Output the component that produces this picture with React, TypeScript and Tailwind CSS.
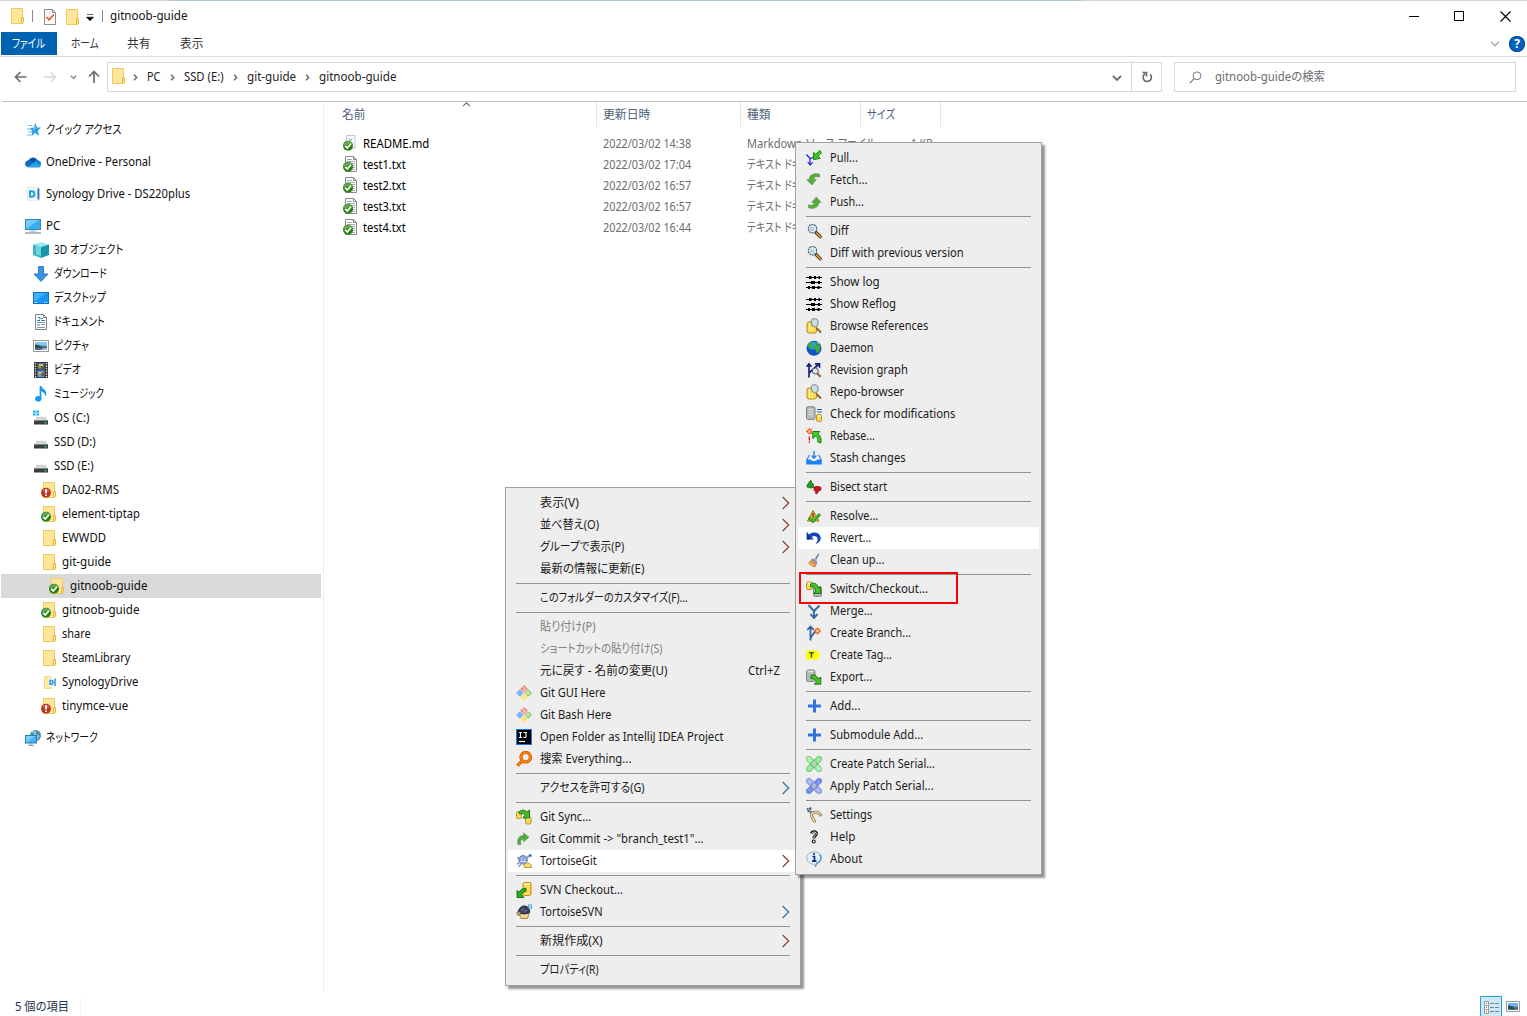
import { useLayoutEffect, useRef, useState, type ReactNode } from "react";

/* Text squeezed or stretched to a given advance width. */
function Fit({ w, children, className = "" }: { w: number; children: string; className?: string }) {
  const ref = useRef<HTMLSpanElement>(null);
  const [scale, setScale] = useState(1);
  useLayoutEffect(() => {
    const measure = () => {
      if (ref.current && ref.current.offsetWidth > 0) {
        setScale((w - 0.6) / ref.current.offsetWidth);
      }
    };
    measure();
    document.fonts?.ready.then(measure);
  }, [w]);
  return (
    <span className={"block shrink-0 whitespace-nowrap " + className} style={{ width: w }}>
      <span ref={ref} className="inline-block origin-left" style={{ transform: `scaleX(${scale})` }}>
        {children}
      </span>
    </span>
  );
}

function Svg({ children, className = "" }: { children: ReactNode; className?: string }) {
  return (
    <svg viewBox="0 0 16 16" width="16" height="16" className={"shrink-0 " + className} fill="none">
      {children}
    </svg>
  );
}

/* ---------- shared shapes ---------- */
const FolderShape = () => (
  <>
    <path d="M2.5.5h11v15h-11z" fill="#ffe69a" stroke="#efcb5c" />
    <path d="M12.5 9.5h2v5l-1 1h-1z" fill="#ffe08a" stroke="#e3b93f" />
  </>
);
const OkBadge = () => (
  <g>
    <circle cx="5" cy="10.8" r="5" fill="#27800f" />
    <path d="M.6 10.500a4.500 4.500 0 0 1 8-2.700L4 10z" fill="#63a850" />
    <path d="M2.200 10.800l2.100 2.200 3.900-4.500" stroke="#fff" strokeWidth="1.800" />
  </g>
);
const ErrBadge = () => (
  <g>
    <circle cx="5" cy="10.8" r="5" fill="#c4351e" />
    <path d="M1 9.500a4.300 4.300 0 0 1 8 0z" fill="#d8614b" />
    <path d="M5 7.300v4" stroke="#fff" strokeWidth="2" />
    <path d="M5 12.400v1.700" stroke="#fff" strokeWidth="2" />
  </g>
);
const Folder = () => <Svg><FolderShape /></Svg>;
const FolderOk = () => <Svg><FolderShape /><OkBadge /></Svg>;
const FolderErr = () => <Svg><FolderShape /><ErrBadge /></Svg>;

const Cyl = ({ x, y, w, h, grey = false }: { x: number; y: number; w: number; h: number; grey?: boolean }) => (
  <g>
    <rect x={x + 0.5} y={y + 0.5} width={w - 1} height={h - 1} rx="1.8" fill={grey ? "#b4b8b8" : "#fbdc55"} stroke={grey ? "#7d8283" : "#b88d16"} />
    <path d={`M${x + 1.5} ${y + 2}h${w - 3}`} stroke={grey ? "#dfe2e2" : "#fff6bd"} strokeWidth="1.4" />
  </g>
);

/* ---------- navigation icons ---------- */
const Star = () => (
  <Svg>
    <path d="M10.500 1l1.500 4.400 4 .1-3.100 3.200 1.400 5-4.300-2.600L6.500 14.300 7.300 9.400 4.800 6l4-.4z" fill="#2f9fe0" />
    <path d="M10 3l.8 3.500-3 2z" fill="#7accf5" />
    <path d="M3.500 3.500h4M2 7h5M3 10h4M2 13h4" stroke="#69b8e8" />
  </Svg>
);
const OneDrive = () => (
  <Svg>
    <path d="M3.200 6.800A5.300 5.300 0 0 1 12.600 6L9 10z" fill="#0a52a5" />
    <path d="M3 6.500C.5 6.800-.2 9 .2 10.600c.3 1.500 1.500 2.400 3 2.400L10 9 5.500 6.700C4.600 6.300 3.800 6.300 3 6.500z" fill="#1167bd" />
    <path d="M9.500 8.500C10.500 6 13.200 5.400 14.400 7c2 .8 2.200 3 1.200 4.800L11 12z" fill="#1585d2" />
    <path d="M2 12.900L9 8.800c1-.4 1.800-.2 2.600.3l4.100 2.800c-.4.9-1.300 1.600-2.200 1.600H3.300z" fill="#28a3ea" />
  </Svg>
);
const Synology = () => (
  <Svg>
    <rect x="2" y="1" width="12.500" height="13.5" rx="1" fill="#f2f3f5" stroke="#dfe2e6" strokeWidth=".6" />
    <path d="M5 5.200h1.700a2.800 2.800 0 0 1 0 5.600H5z" stroke="#19a9dc" strokeWidth="2" />
    <path d="M13.400 2.500v11" stroke="#2e6cd2" strokeWidth="1.800" />
  </Svg>
);
const Pc = () => (
  <Svg>
    <rect x=".5" y="1.5" width="15" height="10" fill="#39acf0" stroke="#3f86b5" />
    <path d="M1 11L14 2H1z" fill="#74cbf9" />
    <path d="M6 13h4" stroke="#b5c3cd" />
    <path d="M0 15h16" stroke="#7f9aab" strokeWidth="1.3" />
    <path d="M4 13h8" stroke="#9fb1bd" strokeWidth=".7" />
  </Svg>
);
const Cube = () => (
  <Svg>
    <path d="M0 2.500L8 0l8 2.500L8 5z" fill="#9fe8ec" />
    <path d="M0 2.500L8 5v11l-8-3z" fill="#3db6c6" />
    <path d="M16 2.500L8 5v11l8-3z" fill="#1b93a8" />
    <path d="M3 3.600L8 5v9.200l-5-2z" fill="#6ed5de" />
  </Svg>
);
const Down = () => (
  <Svg>
    <path d="M5.5.5h5V8H15l-7 7.5L1 8h4.5z" fill="#3a92e2" stroke="#2a79c4" strokeWidth=".9" />
  </Svg>
);
const Desk = () => (
  <Svg>
    <rect x=".5" y="2.5" width="15" height="11" fill="#1a97f3" stroke="#0f70c0" />
    <path d="M1 12L13 3H1z" fill="#3fb0ff" />
    <path d="M2 12.5h2M11 12.5h1M13 12.5h1" stroke="#d5efff" />
  </Svg>
);
const Doc = () => (
  <Svg>
    <path d="M2.5.5h8l3 3v12h-11z" fill="#fff" stroke="#7e8689" />
    <path d="M10.5.5v3h3" stroke="#7e8689" />
    <path d="M4 8.5h8M4 13.5h8M8 10.5h4" stroke="#8b9499" />
    <path d="M4 6.5h3M8 4.5h2M8 6.5h4M4 11h3" stroke="#2c7fae" strokeWidth="1.2" />
    <path d="M5 3.5h2v2" stroke="#2c7fae" />
  </Svg>
);
const Pic = () => (
  <Svg>
    <rect x=".5" y="2.5" width="15" height="11" fill="#fff" stroke="#9a9a9a" />
    <path d="M2 4h12v5H2z" fill="#8ac7f2" />
    <path d="M2 7c3-1 5 1 12 1v4H2z" fill="#48738c" />
    <path d="M2 7c3-1 5 1 8 3H2z" fill="#2d4d45" />
    <path d="M8 12c2-2 4-2 6-2v2z" fill="#9fc2d8" />
  </Svg>
);
const Film = () => (
  <Svg>
    <path d="M1 0h14v16H1z" fill="#363636" />
    <path d="M2.5 1v15M13.5 1v15" stroke="#e8e8e8" strokeWidth="1.3" strokeDasharray="1.3 1.3" />
    <path d="M4.5 1h7v6.5h-7z" fill="#3d6fb4" />
    <path d="M4.5 8.5h7V15h-7z" fill="#5c9be4" />
    <path d="M6 2h4v2H6zM5 10h3v2H5z" fill="#f0b73c" />
    <path d="M8 4h3v3H8zM8.5 11h3v3h-3z" fill="#6c5a34" />
    <path d="M5 4h3v2H5z" fill="#5fa24a" />
  </Svg>
);
const Note = () => (
  <Svg>
    <ellipse cx="5.2" cy="12.7" rx="3.2" ry="2.8" fill="#149bef" />
    <path d="M6.6 0h1.8c.2 2.5 4.9 3.8 4.9 7.2 0 1.2-.5 2.3-1.3 3.1.4-3.2-1.6-4-3.6-5v7.5H6.6z" fill="#149bef" />
  </Svg>
);
const Drive = ({ os = false }: { os?: boolean }) => (
  <Svg>
    <path d="M3.5 6.8h9L15 11H1z" fill="#d3d7da" />
    <rect x="1" y="10.500" width="14" height="4" fill="#3a3d3f" />
    <rect x="11.5" y="12" width="2" height="1.4" fill="#38d05a" />
    {os && (
      <path d="M0 .500h2.600v2.200H0zM3.400 .500H6v2.200H3.400zM0 3.500h2.600v2H0zM3.400 3.500H6v2H3.400z" fill="#17b0ef" />
    )}
  </Svg>
);
const SynFolder = () => (
  <Svg>
    <path d="M3.5 2.5h5l2 1v11h-7z" fill="#ffe7a0" stroke="#f4d888" />
    <rect x="7.5" y="4.5" width="7.5" height="7.5" fill="#edf4fb" />
    <path d="M9 6.5h1.2a1.8 1.8 0 0 1 0 3.7H9z" stroke="#249fdf" strokeWidth="1.5" />
    <path d="M14 4.5v7.5" stroke="#2e7fd2" strokeWidth="1.3" />
  </Svg>
);
const Net = () => (
  <Svg>
    <circle cx="10.5" cy="5.5" r="5.5" fill="#4f8fae" />
    <path d="M7 2c2-1 4 0 3 2s3 1 4 3M9 7c1 1 3 0 4 2" stroke="#a9d0de" strokeWidth="1.5" />
    <rect x=".5" y="5.5" width="11" height="7.5" fill="#48b3f3" stroke="#2a7cb5" />
    <path d="M1 12.5L10 6H1z" fill="#7ccdfa" />
    <path d="M3 15.3h6M6 13v2" stroke="#6f95ad" />
  </Svg>
);

/* ---------- file icons ---------- */
const FileMd = () => (
  <Svg>
    <path d="M3.500.5h8.500v13H3.500z" fill="#f6f8fa" stroke="#c3c9ce" />
    <path d="M6 3.500l1.500 2.500 1.500-2.500" stroke="#84a9c9" />
    <OkBadge />
  </Svg>
);
const FileTxt = () => (
  <Svg>
    <path d="M2.5.5h8l3 3v12h-11z" fill="#fff" stroke="#83898d" />
    <path d="M10.5.5v3h3" stroke="#83898d" />
    <path d="M4 3.5h5M4 5.5h8M4 7.5h8M9 9.5h3M9 11.5h3M9 13.5h3" stroke="#a3a9ad" />
    <OkBadge />
  </Svg>
);

/* ---------- context menu icons ---------- */
const Pull = () => (
  <Svg>
    <path d="M.5 4.5l3.500 4v6M7.500 7L4 9" stroke="#1420e8" strokeWidth="1.200" />
    <path d="M1.800 12l2.400 3 2.400-3" stroke="#1420e8" strokeWidth="1.200" />
    <path d="M7.500 9.700V2.300l2.300 2L14 .4l1.600 2.200-3.500 3.500 2.200 2.200z" fill="#3fc320" stroke="#1b7a10" strokeWidth=".9" />
  </Svg>
);
const Fetch = () => (
  <Svg>
    <path d="M13.500 2.200C9 1 3.300 2 3.300 7.500H.8L5.800 13l4.500-5.500H7.800c-.2-2.500 2.500-3.500 5.700-2.300z" fill="#4cb42c" stroke="#7b917a" strokeWidth=".9" />
  </Svg>
);
const Push = () => (
  <Svg>
    <path d="M2.500 13.800C7 15 12.700 14 12.700 8.500h2.300L10.400 3 5.700 8.500h2.500c.2 2.500-2.500 3.500-5.700 2.300z" fill="#4cb42c" stroke="#7b917a" strokeWidth=".9" />
  </Svg>
);
const Diff = () => (
  <Svg>
    <path d="M9.500 9l5.800 5.700" stroke="#2a1c08" strokeWidth="3.200" />
    <path d="M10 9.500l5 4.900" stroke="#eda02d" strokeWidth="1.700" />
    <circle cx="6.500" cy="5.700" r="4.200" fill="#d8edf7" stroke="#4d5c68" strokeWidth="1.100" strokeDasharray="2 .6" />
    <path d="M4.500 5h4M4.500 7h4" stroke="#6e889d" strokeDasharray="1.200 .8" />
  </Svg>
);
const Log = () => (
  <Svg>
    <path d="M0 3.500h16M0 8.500h16M0 13.500h16" stroke="#000" />
    <path d="M3 3.500h2.500M8 3.500h2M12.500 3.500h1.500M5 8.500h4M12 8.500h2M2 13.500h2M6 13.500h3M11.500 13.500h2" stroke="#000" strokeWidth="2.800" />
  </Svg>
);
const Browse = () => (
  <Svg>
    <rect x="1" y="4" width="9.500" height="11" rx="2" fill="#fadb50" stroke="#b48b17" />
    <path d="M3.500 6v8M6 9v5" stroke="#fdf1a4" />
    <path d="M10.500 10l4.500 4.500" stroke="#8c6021" strokeWidth="1.800" />
    <path d="M5 2.500L7 .8h3l2 1.700V7L9.500 9 6 7.500z" fill="#cfdbe6" stroke="#6b7a88" strokeWidth=".9" />
  </Svg>
);
const Globe = () => (
  <Svg>
    <circle cx="8" cy="8.300" r="7.500" fill="#1357c0" />
    <circle cx="6.500" cy="5.500" r="4" fill="#2f9df0" />
    <path d="M4 2.500c2-1.500 4 0 3 1.500S5.500 6 6.500 7 4 10 3 8 1.500 5 4 2.500zM8.500 5c2-1.500 4 0 5.500 1 .8 3-.5 6-3 7-1.500-1-.5-3-2-4s-1.500-3-.5-4z" fill="#3fae36" />
    <path d="M10 1.500c1.500.5 3 1.500 3.500 3l-2-.5z" fill="#8fe070" />
  </Svg>
);
const Graph = () => (
  <Svg>
    <path d="M3 15.500V2M.7 4.800L3 1.800l2.500 3M3 11L12.500 2.500M9 1.800h4.500v4" stroke="#14207c" strokeWidth="1.700" />
    <path d="M11 11l3.500 3.700" stroke="#9a5a20" strokeWidth="2" />
    <circle cx="9.300" cy="9" r="3" fill="#d5e6f2" stroke="#505e6c" />
  </Svg>
);
const Check = () => (
  <Svg>
    <rect x=".5" y=".8" width="8.500" height="12.500" rx="1.500" fill="#b8bcbe" stroke="#777c7f" />
    <path d="M2.500 3.500h4.500M2.500 6h4.500M2.500 8.500h4.500" stroke="#e3e5e6" />
    <path d="M3.500 4.500h1M5.500 7h1" stroke="#858b8e" />
    <path d="M11 3.500h5M11 6h5" stroke="#1c6f9c" strokeWidth="1.200" />
    <Cyl x={10} y={8} w={6} h={8} />
  </Svg>
);
const Rebase = () => (
  <Svg>
    <circle cx="3.500" cy="3.500" r="1.900" fill="#fff0a0" stroke="#f4581c" strokeWidth="1.300" />
    <path d="M3.500 0v1M0 3.500h1M5.500 1.200L6.500.4M.8 1.200L0 .4M5.500 5.500l1 1" stroke="#f4581c" />
    <path d="M3.300 8.500v4M3.300 13.500v1.500" stroke="#f01010" strokeWidth="1.300" />
    <path d="M6.800 10.500V3.500h7L12 5.800c2.500 1.800 3.700 5 2.800 9.200l-3-1c.5-2.500 0-4.500-2-6z" fill="#45cc25" stroke="#1e7a14" />
  </Svg>
);
const Stash = () => (
  <Svg>
    <path d="M3.500 5h9L15 10H1z" fill="#f5f9ff" />
    <path d="M3.500 5L.7 10M15.300 10l-2.800-5" stroke="#2f80e6" strokeWidth="1.200" />
    <path d="M.2 9.500h4.600c.5 2 5.900 2 6.400 0h4.600v5H.2z" fill="#1b80f5" />
    <path d="M8 1v7M5.500 5.500L8 8.200l2.500-2.700" stroke="#2a7ce0" strokeWidth="1.400" />
  </Svg>
);
const Bisect = () => (
  <Svg>
    <path d="M1 6.500L2.500 4 4.500 1.500l1.200.5-.2 2L7.500 5v3.500l-3 .5L1 8z" fill="#1c9a27" stroke="#0d6a16" strokeWidth=".7" />
    <path d="M8 8l3.500-.7 3.500 1v2.500l-2.500 1.500-1.800 2.700-1.200-.5.300-2.500L8 11.500z" fill="#c9151f" stroke="#860c12" strokeWidth=".7" />
  </Svg>
);
const Resolve = () => (
  <Svg>
    <path d="M7 2.500L13 13H1.500z" fill="#ecc04a" stroke="#a87615" />
    <path d="M7 5v4.500M7 11v1" stroke="#7a3d0c" strokeWidth="1.500" />
    <path d="M3 9.500l3.800 3.800L14 6" stroke="#1c8c14" strokeWidth="2.800" />
    <path d="M3.300 9.700L6.800 13l6.700-6.700" stroke="#4fd336" strokeWidth="1.100" />
  </Svg>
);
const Revert = () => (
  <Svg>
    <path d="M.8 2v7.500h7.200L5.700 7.200c2-2 5-1.200 5.800 1C12 10 11.300 12 9.500 14c4-1.300 5.800-4.300 5-7.300C13.400 2.500 7 1 3.200 4.600z" fill="#1544b8" />
    <path d="M.8 2v7.500h3.200z" fill="#0c2c96" />
  </Svg>
);
const Clean = () => (
  <Svg>
    <path d="M12.800 2L9.500 7.500" stroke="#7d8288" strokeWidth="1.500" />
    <path d="M7 6.500l4 3-.5 2L5.500 8z" fill="#9a9ae0" stroke="#6f6fb0" strokeWidth=".6" />
    <path d="M5.500 8l5 3.500-1.500 3.300C6.500 14.500 4 13 2.800 11z" fill="#e79a4c" stroke="#b5682a" strokeWidth=".7" />
    <path d="M5 11l-1 1M7 12l-1 1.500" stroke="#fbd7a4" />
  </Svg>
);
const Switch = () => (
  <Svg>
    <Cyl x={7} y={5.5} w={9} h={10.5} grey />
    <Cyl x={0} y={0.5} w={7} h={8.5} />
    <path d="M4.500 3c3.500-1.800 7-.5 8 4.200l2.200-1.700v7H7.500L10 10.300C9.500 7 7.500 5 4.500 6z" fill="#43c325" stroke="#176b10" strokeWidth=".9" />
  </Svg>
);
const Merge = () => (
  <Svg>
    <path d="M2.500 2L8 8v6.500M13.500 2.500L8 8M4.500 11.200L8 15l3.500-3.800" stroke="#3465a4" strokeWidth="1.900" />
  </Svg>
);
const Branch = () => (
  <Svg>
    <path d="M4.500 15.500V2M1.300 4.800L4.500 1.500l3.300 3.300M4.500 13L10 5" stroke="#3465a4" strokeWidth="1.800" />
    <circle cx="11.500" cy="6" r="2" fill="#ffe08a" stroke="#f36b2c" strokeWidth="1.300" />
    <path d="M11.500 2.500v1.500M11.500 8v1.500M8 6h1M14 6h1.200M9.200 3.700l.8.800M13.800 3.700l-.8.800M9.200 8.300l.8-.8M13.800 8.300l-.8-.8" stroke="#ef5a25" />
  </Svg>
);
const Tag = () => (
  <Svg>
    <path d="M0 3.500h11l3.500 4.500-3.500 4.500H0z" fill="#ffff00" />
    <path d="M3.200 5.700h4.600M5.500 5.500v5" stroke="#1e6b14" strokeWidth="1.500" />
  </Svg>
);
const Export = () => (
  <Svg>
    <Cyl x={0} y={0.5} w={9.5} h={12.5} grey />
    <path d="M5 6.500c3-1.500 6-.3 6.600 3.300l3.200-1.600v7H8.300l2-2.200C9.500 10.500 8 9.300 5 9.700z" fill="#43c325" stroke="#176b10" strokeWidth=".9" />
  </Svg>
);
const Plus = () => (
  <Svg>
    <path d="M8.500 1.500v13M2 8h13" stroke="#3174dc" strokeWidth="3" />
  </Svg>
);
const Patch = ({ blue = false }: { blue?: boolean }) => (
  <Svg>
    <g stroke={blue ? "#6a82c4" : "#5cb46a"} strokeWidth=".8">
      <rect x="-1.700" y="5.400" width="19.400" height="5.200" rx="1.800" transform="rotate(45 8 8)" fill={blue ? "#a3b5f2" : "#adf0b2"} />
      <rect x="-1.700" y="5.400" width="19.400" height="5.200" rx="1.800" transform="rotate(-45 8 8)" fill={blue ? "#6f8ef0" : "#8ceb93"} />
      <rect x="5.400" y="5.400" width="5.200" height="5.200" transform="rotate(45 8 8)" fill={blue ? "#a0a9cf" : "#a8cfac"} />
    </g>
    <path d="M7 8h.8M8.500 7h.8M8 9.500h.8M8 6h.6M3 4h.7M12.500 4h.7M3 12h.7M12.500 12h.7" stroke="#fff" />
  </Svg>
);
const Settings = () => (
  <Svg>
    <path d="M5.500 5.500C5 9 6.500 12 8.500 14M6.500 6c3-1.500 6.500-1 8 2" stroke="#8f7a55" strokeWidth="3" strokeLinecap="round" />
    <path d="M5.500 5.500C5 9 6.500 12 8.500 14M6.500 6c3-1.500 6.500-1 8 2" stroke="#e8d3a2" strokeWidth="1.500" strokeLinecap="round" />
    <path d="M1 1.500l4.500 4M5 .5L2 5" stroke="#56607e" strokeWidth="2.200" />
    <path d="M2 2l3 2.500" stroke="#b9c0d4" />
  </Svg>
);
const Help = () => (
  <Svg>
    <path d="M5.500 4.500c.3-2.500 5.200-2.600 5 .2-.1 2-2.700 2-2.700 4.800" stroke="#111" strokeWidth="2.800" />
    <path d="M5.600 4.500c.4-1.900 4.800-2 4.700.2-.1 1.700-2.500 2-2.500 4.500" stroke="#fff" strokeWidth=".9" />
    <circle cx="7.700" cy="12.500" r="1.500" fill="#fff" stroke="#111" strokeWidth="1.100" />
  </Svg>
);
const About = () => (
  <Svg>
    <path d="M8 .8c4.300 0 7.300 2.500 7.300 6S12.500 12.600 10 13l-.5 2.700L7 13C3.300 12.600.8 10.300.8 6.800S3.700.8 8 .8z" fill="#e0effa" stroke="#8fa9bd" strokeWidth=".9" />
    <path d="M13.500 3.500c2.500 3 1.500 7-3 9l-1 3" stroke="#4d93c8" strokeWidth="1.200" />
    <path d="M8 1.900v1.900M6.500 5.500h2v4.700M6 10.200h4.500" stroke="#16227a" strokeWidth="1.700" />
  </Svg>
);
const GitLogo = () => (
  <Svg>
    <path d="M8 0l3.800 3.800L8 7.600 4.200 3.800z" fill="#f2847c" />
    <path d="M3.800 4.200L7.600 8l-3.800 3.800L0 8z" fill="#80b3ff" />
    <path d="M12.200 4.200L16 8l-3.800 3.800L8.400 8z" fill="#8dd35f" />
    <path d="M8 8.400l3.800 3.800L8 16l-3.800-3.800z" fill="#ffe680" />
    <path d="M6.500 1.800l3 3M8 3.500v2.500" stroke="#fff" strokeWidth=".9" />
    <circle cx="11.800" cy="7.800" r="1.200" stroke="#fff" strokeWidth=".8" />
  </Svg>
);
const Idea = () => (
  <Svg>
    <rect x=".5" y=".5" width="15" height="15" fill="#000" stroke="#0f7cf0" />
    <path d="M3 3.500h3M4.500 3.500v5M3 8.500h3M7.500 3.500H11M10 3.500v4.500c0 .6-2 .8-2.600 0" stroke="#fff" strokeWidth="1.100" />
    <path d="M3 12.500h6" stroke="#fff" strokeWidth="1.200" />
  </Svg>
);
const Everything = () => (
  <Svg>
    <path d="M6.200 9.800L1.300 14.700" stroke="#c25300" strokeWidth="3.200" />
    <circle cx="9.700" cy="6.200" r="4.700" stroke="#c25300" strokeWidth="3.200" />
    <path d="M6.200 9.800L1.500 14.500" stroke="#ff8000" strokeWidth="2" />
    <circle cx="9.700" cy="6.200" r="4.700" stroke="#ff8000" strokeWidth="2" />
  </Svg>
);
const Sync = () => (
  <Svg>
    <Cyl x={0} y={2} w={6} h={8} />
    <Cyl x={9} y={7.5} w={6.5} h={8} />
    <path d="M2.500 3.500C5 .5 9 .5 10.500 3l3-2v8H6.800L9 6.500C7.500 4 5 4 4 5.500z" fill="#3fbf26" stroke="#1a6d12" strokeWidth=".9" />
  </Svg>
);
const Commit = () => (
  <Svg>
    <path d="M2 13.500C1 8 3 4.500 7.500 4.500V2l5.500 4.200-5.500 4.500V8C5 8 3.800 10 4.800 13.500z" fill="#43b02a" stroke="#7d927c" strokeWidth=".9" />
  </Svg>
);
const TGit = () => (
  <Svg>
    <circle cx="7" cy="6.800" r="4.300" fill="#8ea6dc" stroke="#5c70a4" strokeWidth=".9" />
    <path d="M5 6h1M8 6h1M4 8.500h6" stroke="#dbe4fa" />
    <path d="M1 4.500l2.500 1M.8 11c1.500 0 2-1.500 3-1.500M3 14c0-1.500 1-2 2-2.500" stroke="#8c97ba" strokeWidth="1.500" />
    <path d="M11 5l2-2.500" stroke="#7c8cc0" strokeWidth="2" />
    <path d="M13 2.500h2.500M14.500 1v3" stroke="#2d6fa5" strokeWidth="1.400" />
    <path d="M8 12c1-2.500 6-2.500 7 0l.5 2.500h-7z" fill="#fae06c" stroke="#b58f26" strokeWidth=".9" />
  </Svg>
);
const SvnCo = () => (
  <Svg>
    <Cyl x={6.5} y={0} w={9} h={14} />
    <path d="M14.500 2v10" stroke="#d7a91f" />
    <path d="M1 15.500V8.500l2 1.800C5 7 7 6.300 10 6.300v3.200c-2 0-3.500 1-4.300 3.200l2.300 2.800z" fill="#2fae1c" stroke="#156310" strokeWidth=".9" />
  </Svg>
);
const TSvn = () => (
  <Svg>
    <path d="M3 9.500h10l-1.500 5H5z" fill="#f0d98c" stroke="#9a7e36" strokeWidth=".9" />
    <path d="M2 9C2.500 4 6 1.500 9 2c3 .4 4.800 3 4.800 6.500L9 10z" fill="#3b4060" stroke="#1c2036" strokeWidth=".9" />
    <path d="M5 6.500l3-2M8 8l3-2" stroke="#7d86b0" />
    <path d="M.8 8.800c0-1 2.500-1.300 4.200 0L4 11H1.500z" fill="#c9b67c" stroke="#65562c" strokeWidth=".7" />
    <path d="M12.500 4V1h3v3z" stroke="#4ba1cf" strokeWidth="1.200" />
  </Svg>
);

/* ---------- data ---------- */
type NavItem = { t: string; w: number; lv: 0 | 1 | 2 | 3; icon: ReactNode; sel?: boolean };
const nav: NavItem[] = [
  { t: "クイック アクセス", w: 76, lv: 0, icon: <Star /> },
  { t: "OneDrive - Personal", w: 106, lv: 0, icon: <OneDrive /> },
  { t: "Synology Drive - DS220plus", w: 145, lv: 0, icon: <Synology /> },
  { t: "PC", w: 15, lv: 0, icon: <Pc /> },
  { t: "3D オブジェクト", w: 70, lv: 1, icon: <Cube /> },
  { t: "ダウンロード", w: 53, lv: 1, icon: <Down /> },
  { t: "デスクトップ", w: 53, lv: 1, icon: <Desk /> },
  { t: "ドキュメント", w: 51, lv: 1, icon: <Doc /> },
  { t: "ピクチャ", w: 36, lv: 1, icon: <Pic /> },
  { t: "ビデオ", w: 27, lv: 1, icon: <Film /> },
  { t: "ミュージック", w: 51, lv: 1, icon: <Note /> },
  { t: "OS (C:)", w: 36, lv: 1, icon: <Drive os /> },
  { t: "SSD (D:)", w: 42, lv: 1, icon: <Drive /> },
  { t: "SSD (E:)", w: 40, lv: 1, icon: <Drive /> },
  { t: "DA02-RMS", w: 58, lv: 2, icon: <FolderErr /> },
  { t: "element-tiptap", w: 79, lv: 2, icon: <FolderOk /> },
  { t: "EWWDD", w: 45, lv: 2, icon: <Folder /> },
  { t: "git-guide", w: 50, lv: 2, icon: <Folder /> },
  { t: "gitnoob-guide", w: 78, lv: 3, icon: <FolderOk />, sel: true },
  { t: "gitnoob-guide", w: 78, lv: 2, icon: <FolderOk /> },
  { t: "share", w: 29, lv: 2, icon: <Folder /> },
  { t: "SteamLibrary", w: 69, lv: 2, icon: <Folder /> },
  { t: "SynologyDrive", w: 77, lv: 2, icon: <SynFolder /> },
  { t: "tinymce-vue", w: 67, lv: 2, icon: <FolderErr /> },
  { t: "ネットワーク", w: 52, lv: 0, icon: <Net /> },
];
const indent = { 0: "pl-6", 1: "pl-8", 2: "pl-10", 3: "pl-12" };

const files = [
  { n: "README.md", w: 67, d: "2022/03/02 14:38", k: "Markdown ソース ファイル", kw: 130, s: "1 KB" },
  { n: "test1.txt", w: 43, d: "2022/03/02 17:04", k: "テキスト ドキュメント", kw: 88, s: "1 KB" },
  { n: "test2.txt", w: 43, d: "2022/03/02 16:57", k: "テキスト ドキュメント", kw: 88, s: "1 KB" },
  { n: "test3.txt", w: 43, d: "2022/03/02 16:57", k: "テキスト ドキュメント", kw: 88, s: "1 KB" },
  { n: "test4.txt", w: 43, d: "2022/03/02 16:44", k: "テキスト ドキュメント", kw: 88, s: "1 KB" },
];

type MenuItem = { t: string; w: number; icon?: ReactNode; arrow?: "red" | "blue"; key?: string; off?: boolean; hot?: boolean };
const shellMenu: (MenuItem | null)[] = [
  { t: "表示(V)", w: 39, arrow: "red" },
  { t: "並べ替え(O)", w: 60, arrow: "red" },
  { t: "グループで表示(P)", w: 85, arrow: "red" },
  { t: "最新の情報に更新(E)", w: 105 },
  null,
  { t: "このフォルダーのカスタマイズ(F)...", w: 148 },
  null,
  { t: "貼り付け(P)", w: 56, off: true },
  { t: "ショートカットの貼り付け(S)", w: 123, off: true },
  { t: "元に戻す - 名前の変更(U)", w: 128, key: "Ctrl+Z" },
  { t: "Git GUI Here", w: 66, icon: <GitLogo /> },
  { t: "Git Bash Here", w: 72, icon: <GitLogo /> },
  { t: "Open Folder as IntelliJ IDEA Project", w: 184, icon: <Idea /> },
  { t: "搜索 Everything...", w: 92, icon: <Everything /> },
  null,
  { t: "アクセスを許可する(G)", w: 105, arrow: "blue" },
  null,
  { t: "Git Sync...", w: 52, icon: <Sync /> },
  { t: 'Git Commit -> "branch_test1"...', w: 164, icon: <Commit /> },
  { t: "TortoiseGit", w: 57, icon: <TGit />, arrow: "red", hot: true },
  null,
  { t: "SVN Checkout...", w: 84, icon: <SvnCo /> },
  { t: "TortoiseSVN", w: 63, icon: <TSvn />, arrow: "blue" },
  null,
  { t: "新規作成(X)", w: 63, arrow: "red" },
  null,
  { t: "プロパティ(R)", w: 59 },
];
const gitMenu: (MenuItem | null)[] = [
  { t: "Pull...", w: 29, icon: <Pull /> },
  { t: "Fetch...", w: 38, icon: <Fetch /> },
  { t: "Push...", w: 35, icon: <Push /> },
  null,
  { t: "Diff", w: 19, icon: <Diff /> },
  { t: "Diff with previous version", w: 134, icon: <Diff /> },
  null,
  { t: "Show log", w: 50, icon: <Log /> },
  { t: "Show Reflog", w: 67, icon: <Log /> },
  { t: "Browse References", w: 99, icon: <Browse /> },
  { t: "Daemon", w: 44, icon: <Globe /> },
  { t: "Revision graph", w: 78, icon: <Graph /> },
  { t: "Repo-browser", w: 75, icon: <Browse /> },
  { t: "Check for modifications", w: 126, icon: <Check /> },
  { t: "Rebase...", w: 46, icon: <Rebase /> },
  { t: "Stash changes", w: 76, icon: <Stash /> },
  null,
  { t: "Bisect start", w: 58, icon: <Bisect /> },
  null,
  { t: "Resolve...", w: 49, icon: <Resolve /> },
  { t: "Revert...", w: 42, icon: <Revert />, hot: true },
  { t: "Clean up...", w: 55, icon: <Clean /> },
  null,
  { t: "Switch/Checkout...", w: 99, icon: <Switch /> },
  { t: "Merge...", w: 43, icon: <Merge /> },
  { t: "Create Branch...", w: 82, icon: <Branch /> },
  { t: "Create Tag...", w: 63, icon: <Tag /> },
  { t: "Export...", w: 43, icon: <Export /> },
  null,
  { t: "Add...", w: 31, icon: <Plus /> },
  null,
  { t: "Submodule Add...", w: 94, icon: <Plus /> },
  null,
  { t: "Create Patch Serial...", w: 106, icon: <Patch /> },
  { t: "Apply Patch Serial...", w: 104, icon: <Patch blue /> },
  null,
  { t: "Settings", w: 43, icon: <Settings /> },
  { t: "Help", w: 26, icon: <Help /> },
  { t: "About", w: 33, icon: <About /> },
];

function Menu({ items }: { items: (MenuItem | null)[] }) {
  return (
    <div className="border border-[#a0a0a0] bg-[#eeeeee] px-[2px] py-1 shadow-[3px_3px_2px_rgba(0,0,0,0.42)]">
      {items.map((it, i) =>
        it === null ? (
          <div key={i} className="h-[7px] px-2 pt-[3px]">
            <div className="h-px bg-[#919191]" />
          </div>
        ) : (
          <div
            key={i}
            className={"flex h-[22px] items-center pl-2 leading-[22px] " + (it.hot ? "bg-white " : "") + (it.off ? "text-[#808080]" : "text-[#1b1b1b]")}
          >
            <div className="mr-2 size-4 shrink-0">{it.icon}</div>
            <Fit w={it.w}>{it.t}</Fit>
            <div className="flex-1" />
            {it.key && <Fit w={33} className="mr-[17px]">{it.key}</Fit>}
            {it.arrow && (
              <svg width="8" height="14" viewBox="0 0 8 14" fill="none" className="-mt-px mr-2">
                <path d="M.7 1l6 6-6 6" stroke={it.arrow === "red" ? "#8a4038" : "#2f72ac"} strokeWidth="1.200" />
              </svg>
            )}
          </div>
        )
      )}
    </div>
  );
}

const Crumb = () => (
  <svg width="5" height="7" viewBox="0 0 5 7" fill="none" className="shrink-0">
    <path d="M1 .8l2.700 2.700L1 6.200" stroke="#6a6a6a" strokeWidth="1.500" />
  </svg>
);

function TitleBar() {
  return (
    <div className="flex h-[31px] items-center pb-px pl-[9px]">
      <Folder />
      <div className="ml-[7px] h-3 w-px bg-[#8a8a8a]" />
      <Svg className="ml-[9px] mt-[2px]">
        <path d="M2.500.5h8l3 3v12h-11z" fill="#fafafa" stroke="#8b8b8b" />
        <path d="M10.500.5v3h3" stroke="#8b8b8b" />
        <path d="M4.500 8l2.500 2.800L12 5.500" stroke="#e8592a" strokeWidth="1.700" />
      </Svg>
      <div className="ml-[6px] mt-[2px]"><Folder /></div>
      <svg width="8" height="7" viewBox="0 0 8 7" className="ml-[6px] mt-[3px]">
        <path d="M1 .5h6M.5 3.200h7L4 6.700z" fill="#000" stroke="#000" strokeWidth=".6" />
      </svg>
      <div className="ml-2 h-3 w-px bg-[#8a8a8a]" />
      <Fit w={78} className="ml-[7px] leading-[30px] text-[#111]">gitnoob-guide</Fit>
      <div className="flex-1" />
      <svg width="10" height="10" viewBox="0 0 10 10" className="mr-[35px]"><path d="M0 5.500h10" stroke="#000" /></svg>
      <svg width="10" height="10" viewBox="0 0 10 10" className="mr-9" fill="none"><path d="M.5.5h9v9h-9z" stroke="#000" /></svg>
      <svg width="11" height="11" viewBox="0 0 11 11" className="mr-4"><path d="M.5.5l10 10M10.500.5l-10 10" stroke="#000" strokeWidth="1.100" /></svg>
    </div>
  );
}

function Tabs() {
  return (
    <div className="flex h-[24px] items-start leading-[24px] text-[#333]">
      <div className="ml-px flex h-[23px] w-14 justify-center bg-[#0063b1] leading-[24px] text-white">
        <Fit w={34}>ファイル</Fit>
      </div>
      <Fit w={28} className="ml-[14px]">ホーム</Fit>
      <Fit w={24} className="ml-7">共有</Fit>
      <Fit w={24} className="ml-[29px]">表示</Fit>
      <div className="flex-1" />
      <svg width="10" height="6" viewBox="0 0 10 6" fill="none" className="mr-[9px] mt-[9px]"><path d="M1 .8l4 4 4-4" stroke="#a5a5a5" strokeWidth="1.300" /></svg>
      <div className="mr-[2px] mt-1 flex size-4 items-center justify-center rounded-full bg-[#0063c1] text-[12px] font-bold leading-4 text-white ring-1 ring-[#0a4c90] ring-inset">?</div>
    </div>
  );
}

function AddressBar() {
  return (
    <div className="flex h-[44px] items-center border-t border-[#dadada] pb-[3px] leading-[28px] text-[#222]">
      <svg width="13" height="12" viewBox="0 0 13 12" fill="none" className="ml-[14px]"><path d="M12.500 6H1.500M6.500 1l-5 5 5 5" stroke="#6c6c6c" strokeWidth="1.700" /></svg>
      <svg width="14" height="12" viewBox="0 0 14 12" fill="none" className="ml-[16px]"><path d="M1 6h11.500M7.500 1l5 5-5 5" stroke="#d8d8d8" strokeWidth="1.500" /></svg>
      <svg width="7" height="5" viewBox="0 0 7 5" fill="none" className="ml-[13px]"><path d="M.8.8l2.700 2.700L6.200.8" stroke="#8d8d8d" strokeWidth="1.400" /></svg>
      <svg width="12" height="14" viewBox="0 0 12 14" fill="none" className="ml-[11px]"><path d="M6 13V1.500M1 6.500l5-5 5 5" stroke="#6c6c6c" strokeWidth="1.700" /></svg>
      <div className="ml-[7px] flex h-[30px] w-[1055px] items-center border border-[#d9d9d9] pl-[2px]">
        <div className="-mt-[2px]"><Folder /></div>
        <div className="ml-[7px] flex"><Crumb /></div>
        <Fit w={14} className="ml-[9px]">PC</Fit>
        <div className="ml-[9px] flex"><Crumb /></div>
        <Fit w={40} className="ml-[9px]">SSD (E:)</Fit>
        <div className="ml-[9px] flex"><Crumb /></div>
        <Fit w={50} className="ml-[9px]">git-guide</Fit>
        <div className="ml-[8px] flex"><Crumb /></div>
        <Fit w={78} className="ml-[9px]">gitnoob-guide</Fit>
        <div className="flex-1" />
        <svg width="10" height="7" viewBox="0 0 10 7" fill="none" className="mr-[9px] mt-[2px]"><path d="M1 1l4 4 4-4" stroke="#6c6c6c" strokeWidth="1.800" /></svg>
        <div className="flex h-full w-[30px] items-center justify-center border-l border-[#d9d9d9]">
          <svg width="12" height="12" viewBox="0 0 12 12" fill="none"><path d="M9.200 3.300A4.200 4.200 0 1 1 4 2.700M1.500 1.500h4v4" stroke="#666" strokeWidth="1.600" /></svg>
        </div>
      </div>
      <div className="ml-3 flex h-[30px] w-[342px] items-center border border-[#d9d9d9] text-[#6d6d6d]">
        <svg width="13" height="13" viewBox="0 0 13 13" fill="none" className="ml-[14px]"><circle cx="8" cy="4.800" r="3.900" stroke="#777" /><path d="M5.200 7.600L.8 12.200" stroke="#777" strokeWidth="1.100" /></svg>
        <Fit w={111} className="ml-[13px]">gitnoob-guideの検索</Fit>
      </div>
    </div>
  );
}

function NavPane() {
  return (
    <div className="w-[324px] shrink-0 border-r border-[#f0f0f0] pt-4">
      {nav.map((n, i) => (
        <div
          key={i}
          className={
            "ml-px mr-[2px] flex h-6 items-center leading-6 text-[#0f0f0f] " +
            indent[n.lv] +
            (n.lv === 0 && i > 0 ? " mt-2" : "") +
            (n.sel ? " bg-[#d9d9d9]" : "")
          }
        >
          {n.icon}
          <Fit w={n.w} className="ml-[5px]">{n.t}</Fit>
        </div>
      ))}
    </div>
  );
}

function FileList() {
  return (
    <div className="flex-1">
      <div className="flex h-[25px] leading-[25px] text-[#4c607a]">
        <div className="relative w-[273px] border-r border-[#e5e5e5] pl-[18px]">
          <Fit w={24}>名前</Fit>
          <svg width="9" height="5" viewBox="0 0 9 5" fill="none" className="absolute left-[138px] top-0"><path d="M1 4.200L4.500.8 8 4.200" stroke="#6d6d6d" strokeWidth="1.100" /></svg>
        </div>
        <div className="w-[144px] border-r border-[#e5e5e5] pl-[6px]"><Fit w={48}>更新日時</Fit></div>
        <div className="w-[120px] border-r border-[#e5e5e5] pl-[6px]"><Fit w={24}>種類</Fit></div>
        <div className="w-[80px] border-r border-[#e5e5e5] pl-[6px]"><Fit w={29}>サイズ</Fit></div>
      </div>
      <div className="pt-[6px]">
        {files.map((f, i) => (
          <div key={i} className="flex h-[21px] items-center pl-[19px] leading-[21px] text-[#6d6d6d]">
            <div className="mb-px">{i === 0 ? <FileMd /> : <FileTxt />}</div>
            <div className="ml-[4px] w-[240px] text-black"><Fit w={f.w}>{f.n}</Fit></div>
            <div className="w-[144px]"><Fit w={89}>{f.d}</Fit></div>
            <div className="w-[108px]"><Fit w={f.kw}>{f.k}</Fit></div>
            <div className="flex w-[78px] justify-end"><Fit w={22}>{f.s}</Fit></div>
          </div>
        ))}
      </div>
    </div>
  );
}

function StatusBar() {
  return (
    <div className="flex h-6 items-end pl-[15px] text-[#1e3250]">
      <Fit w={55} className="leading-[18px]">5 個の項目</Fit>
      <div className="ml-[10px] h-5 w-px bg-[#f7f7f7]" />
      <div className="flex-1" />
      <svg width="22" height="20" viewBox="0 0 22 20" fill="none">
        <path d="M.5 21V.5h21V21" fill="#cce8f6" stroke="#26a0da" />
        <path d="M4.500 5.500h4v4h-4zM4.500 9.500h4v4h-4zM4.500 13.500h4v4h-4z" fill="#fff" stroke="#9b9b9b" />
        <path d="M10 7.500h4M15 7.500h4M10 11.500h4M15 11.500h4M10 15.500h4M15 15.500h4" stroke="#76858d" />
        <path d="M6 7.500h1" stroke="#555" /><path d="M6 11.500h1" stroke="#2a80d0" /><path d="M6 15.500h1" stroke="#d02020" />
      </svg>
      <svg width="14" height="11" viewBox="0 0 14 11" fill="none" className="mb-1 ml-1 mr-[7px]">
        <path d="M.5.5h13v10H.5z" fill="#fff" stroke="#9b9b9b" />
        <path d="M2 2h10v4H2z" fill="#74b4ee" />
        <path d="M2 5c3-1 5 1 10 1v3H2z" fill="#4a7387" />
        <path d="M2 5c3-1 5 1 7 3H2z" fill="#2d4d45" />
      </svg>
    </div>
  );
}

export default function App() {
  return (
    <div className="relative flex h-[1016px] w-[1527px] flex-col overflow-hidden bg-white font-['Noto_Sans','Noto_Sans_CJK_JP',sans-serif] text-[12px] [font-feature-settings:'palt']" lang="ja">
      <div className="flex h-px shrink-0">
        <div className="w-[169px] bg-[#d4d4d4]" />
        <div className="w-[913px] bg-[#b0cad2]" />
        <div className="flex-1 bg-[#d4d4d4]" />
      </div>
      <TitleBar />
      <Tabs />
      <AddressBar />
      <div className="ml-[2px] mt-px h-px shrink-0 bg-[#bfbfbf]" />
      <div className="flex h-[890px] shrink-0">
        <NavPane />
        <FileList />
      </div>
      <StatusBar />

      <div className="absolute left-[505px] top-[487px] w-[296px]"><Menu items={shellMenu} /></div>
      <div className="absolute left-[795px] top-[142px] w-[247px]"><Menu items={gitMenu} /></div>
      <div className="absolute left-[799px] top-[572px] h-8 w-[159px] border-2 border-[#ff0000]" />
    </div>
  );
}
